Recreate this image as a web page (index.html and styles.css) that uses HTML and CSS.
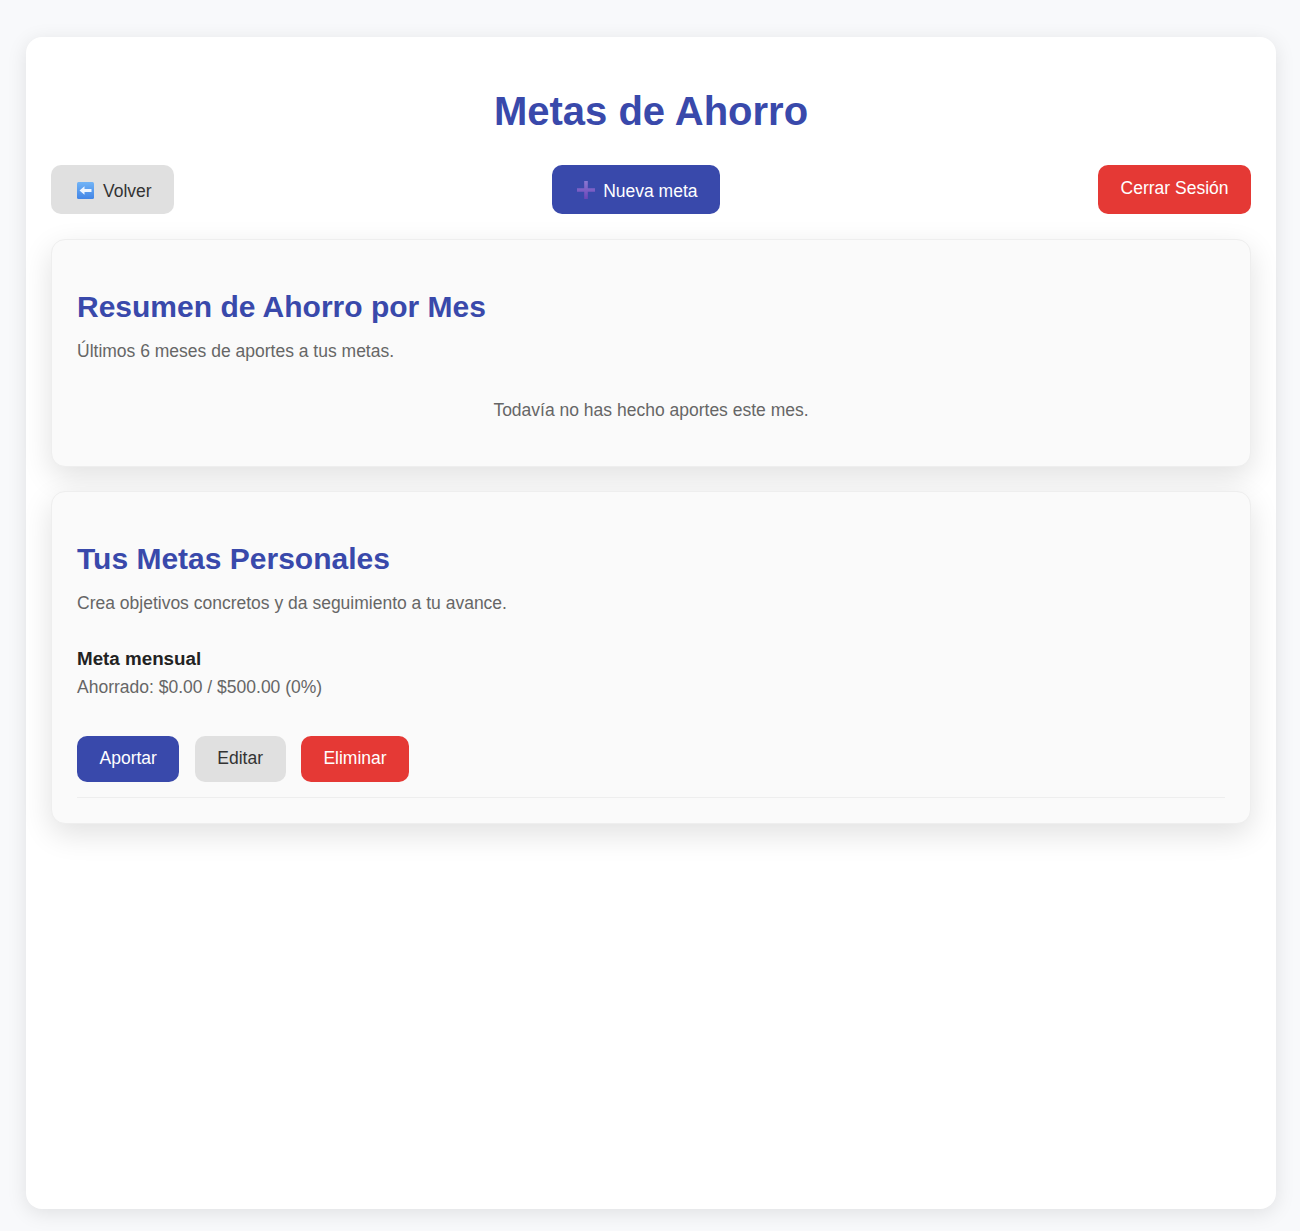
FILE: index.html
```html
<!DOCTYPE html>
<html lang="es">
<head>
    <meta charset="UTF-8">
    <meta name="viewport" content="width=device-width, initial-scale=1.0">
    <title>Metas de Ahorro</title>
    <link rel="stylesheet" href="styles.css">
</head>
<body>
    <div class="container">
        <h1>Metas de Ahorro</h1>

        <!-- Barra de acciones -->
        <div class="top-bar">
            <a class="btn btn-gray">
                <svg class="icon icon-back" viewBox="0 0 17 17">
                    <defs>
                        <linearGradient id="backBg" x1="0" y1="0" x2="0" y2="1">
                            <stop offset="0" stop-color="#72b4f6"/>
                            <stop offset="1" stop-color="#4285e6"/>
                        </linearGradient>
                    </defs>
                    <rect width="17" height="17" rx="1.5" fill="url(#backBg)"/>
                    <path d="M2.5 8.5 L7.5 4.2 V7 H14.5 V10 H7.5 V12.8 Z" fill="#eef5ff"/>
                </svg>
                Volver
            </a>
            <a class="btn btn-blue">
                <svg class="icon" viewBox="0 0 18 18">
                    <defs>
                        <linearGradient id="plusFill" x1="0" y1="0" x2="0" y2="1">
                            <stop offset="0" stop-color="#8a78d2"/>
                            <stop offset="1" stop-color="#6c45b8"/>
                        </linearGradient>
                    </defs>
                    <path d="M7.2 0 H10.8 V7.2 H18 V10.8 H10.8 V18 H7.2 V10.8 H0 V7.2 H7.2 Z" fill="url(#plusFill)"/>
                </svg>
                Nueva meta
            </a>
            <button class="btn btn-red logout">Cerrar Sesión</button>
        </div>

        <!-- Resumen -->
        <div class="card">
            <h2>Resumen de Ahorro por Mes</h2>
            <p class="muted">Últimos 6 meses de aportes a tus metas.</p>
            <p class="muted empty">Todavía no has hecho aportes este mes.</p>
        </div>

        <!-- Metas -->
        <div class="card">
            <h2>Tus Metas Personales</h2>
            <p class="muted">Crea objetivos concretos y da seguimiento a tu avance.</p>
            <div class="goal">
                <div class="goal-name">Meta mensual</div>
                <div class="muted">Ahorrado: $0.00 / $500.00 (0%)</div>
                <div class="goal-actions">
                    <button class="btn-small btn-blue">Aportar</button>
                    <button class="btn-small btn-gray">Editar</button>
                    <button class="btn-small btn-red">Eliminar</button>
                </div>
            </div>
        </div>
    </div>
</body>
</html>
```

FILE: styles.css
```css
* {
    box-sizing: border-box;
}

body {
    font-family: 'Liberation Sans', Arial, sans-serif;
    background-color: #f8f9fb;
    margin: 0;
    padding: 37px 24px 22px 26px;
    color: #333;
}

.container {
    background: white;
    border-radius: 16px;
    box-shadow: 0 4px 20px rgba(0, 0, 0, 0.1);
    height: 1172px;
    padding: 51px 25px 25px;
}

h1 {
    color: #3949ab;
    font-size: 40px;
    line-height: 46px;
    text-align: center;
    margin: 0 0 31px;
}

.top-bar {
    display: flex;
    justify-content: space-between;
    margin-bottom: 25px;
}

.btn {
    display: flex;
    align-items: center;
    gap: 8px;
    height: 49px;
    padding: 3px 22px 0 25px;
    border: none;
    border-radius: 10px;
    font-family: inherit;
    font-size: 17.5px;
}

.btn-gray.btn {
    padding-left: 26px;
    padding-right: 22px;
    gap: 9px;
}

.icon {
    width: 18px;
    height: 18px;
    margin-top: -3px;
}

.icon-back {
    width: 17px;
    height: 17px;
    margin-top: -2px;
}

.logout {
    padding: 0 22.5px 3px;
}

.btn-gray {
    background-color: #e0e0e0;
    color: #333;
}

.btn-blue {
    background-color: #3949ab;
    color: white;
}

.btn-red {
    background-color: #e53935;
    color: white;
}

.card {
    background-color: #fafafa;
    border: 1px solid #eee;
    border-radius: 14px;
    box-shadow: 0 10px 30px rgba(0, 0, 0, 0.12);
    padding: 49px 25px 25px;
    margin-bottom: 24px;
}

h2 {
    color: #3949ab;
    font-size: 30px;
    line-height: 36px;
    margin: 0 0 16px;
}

.muted {
    color: #666;
    font-size: 17.5px;
    line-height: 21px;
    margin: 0;
}

.empty {
    text-align: center;
    margin: 38px 0 20px;
}

.goal {
    margin-top: 33px;
    padding-bottom: 15px;
    border-bottom: 1px solid #eee;
}

.goal-name {
    color: #222;
    font-size: 18.8px;
    font-weight: bold;
    line-height: 23px;
    margin-bottom: 7px;
}

.goal-actions {
    display: flex;
    gap: 15.4px;
    margin-top: 38px;
}

.btn-small {
    height: 46px;
    padding: 0 22.5px 2px;
    border: none;
    border-radius: 10px;
    font-family: inherit;
    font-size: 17.5px;
}
```
